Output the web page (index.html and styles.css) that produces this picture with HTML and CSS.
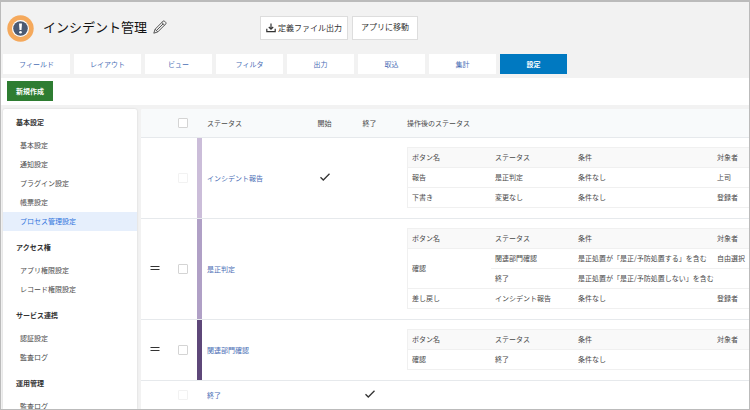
FILE: index.html
```html
<!DOCTYPE html>
<html lang="ja">
<head>
  <meta charset="UTF-8">
  <meta name="viewport" content="width=device-width, initial-scale=1">
  <title>インシデント管理</title>
  <link rel="stylesheet" href="styles.css">
</head>
<body>
<div class="window">

  <!-- ヘッダー -->
  <header class="header">
    <div class="app-title">
      <svg class="app-icon" viewBox="0 0 27 27" aria-hidden="true">
        <circle cx="13.5" cy="13.5" r="13.2" fill="#f5a95c"/>
        <circle cx="13.5" cy="13.9" r="8.6" fill="#e2a566"/>
        <circle cx="13.5" cy="13.5" r="8.5" fill="#fff"/>
        <circle cx="13.5" cy="13.5" r="7.3" fill="#4b5a73"/>
        <path d="M12 8.6h3l-.5 6.3h-2z" fill="#fff"/>
        <circle cx="13.5" cy="17.3" r="1.3" fill="#fff"/>
      </svg>
      <h1>インシデント管理</h1>
      <svg class="edit-icon" viewBox="0 0 14 14" aria-hidden="true">
        <path d="M.8 13.2l1.3-4L10 1.3q.8-.8 1.7 0l1 1q.8.9 0 1.7L4.8 11.9z M2.1 9.2l2.7 2.7 M8.8 2.5l2.7 2.7 M3.5 10.5l6.6-6.6" fill="none" stroke="#555" stroke-width="1" stroke-linejoin="round"/>
      </svg>
    </div>
    <button type="button" class="header-btn with-icon">
      <svg class="download-icon" viewBox="0 0 10 10" aria-hidden="true">
        <path d="M5 .5v5.5M2.8 4L5 6.2 7.2 4M.8 5.8v2.8h8.4V5.8" fill="none" stroke="#333" stroke-width="1.2"/>
      </svg>定義ファイル出力</button>
    <button type="button" class="header-btn">アプリに移動</button>
  </header>

  <!-- タブ -->
  <nav class="tabs">
    <a href="#" class="tab">フィールド</a>
    <a href="#" class="tab">レイアウト</a>
    <a href="#" class="tab">ビュー</a>
    <a href="#" class="tab">フィルタ</a>
    <a href="#" class="tab">出力</a>
    <a href="#" class="tab">取込</a>
    <a href="#" class="tab">集計</a>
    <a href="#" class="tab active">設定</a>
  </nav>

  <div class="toolbar">
    <button type="button" class="new-btn">新規作成</button>
  </div>

  <div class="content">
    <!-- サイドメニュー -->
    <aside class="sidebar">
      <h2>基本設定</h2>
      <ul>
        <li><a href="#">基本設定</a></li>
        <li><a href="#">通知設定</a></li>
        <li><a href="#">プラグイン設定</a></li>
        <li><a href="#">帳票設定</a></li>
        <li><a href="#" class="current">プロセス管理設定</a></li>
      </ul>
      <h2>アクセス権</h2>
      <ul>
        <li><a href="#">アプリ権限設定</a></li>
        <li><a href="#">レコード権限設定</a></li>
      </ul>
      <h2>サービス連携</h2>
      <ul>
        <li><a href="#">認証設定</a></li>
        <li><a href="#">監査ログ</a></li>
      </ul>
      <h2>運用管理</h2>
      <ul>
        <li><a href="#">監査ログ</a></li>
      </ul>
    </aside>

    <!-- ステータス一覧 -->
    <main class="main">
      <table class="status-table">
        <colgroup>
          <col class="col-drag"><col class="col-check"><col class="col-color"><col class="col-status">
          <col class="col-flag"><col class="col-flag"><col>
        </colgroup>
        <thead>
          <tr>
            <th></th>
            <th><input type="checkbox" aria-label="すべて選択"></th>
            <th></th>
            <th class="name">ステータス</th>
            <th class="flag">開始</th>
            <th class="flag">終了</th>
            <th class="actions">操作後のステータス</th>
          </tr>
        </thead>
        <tbody>
          <tr>
            <td></td>
            <td><input type="checkbox" aria-label="インシデント報告" disabled></td>
            <td class="color-light"></td>
            <td class="name"><a href="#">インシデント報告</a></td>
            <td class="flag"><svg class="check-icon" viewBox="0 0 10 8" aria-hidden="true"><path d="M.5 4.2l2.8 2.8L9.5.8"/></svg></td>
            <td></td>
            <td class="actions">
              <table class="action-table">
                <colgroup><col class="col-button"><col class="col-next"><col class="col-cond"><col></colgroup>
                <tr><th>ボタン名</th><th>ステータス</th><th>条件</th><th>対象者</th></tr>
                <tr><td>報告</td><td>是正判定</td><td>条件なし</td><td>上司</td></tr>
                <tr><td>下書き</td><td>変更なし</td><td>条件なし</td><td>登録者</td></tr>
              </table>
            </td>
          </tr>
          <tr>
            <td><svg class="drag-icon" viewBox="0 0 10 4" aria-hidden="true"><path d="M.5 .5h9M.5 3.5h9"/></svg></td>
            <td><input type="checkbox" aria-label="是正判定"></td>
            <td class="color-mid"></td>
            <td class="name"><a href="#">是正判定</a></td>
            <td></td>
            <td></td>
            <td class="actions">
              <table class="action-table">
                <colgroup><col class="col-button"><col class="col-next"><col class="col-cond"><col></colgroup>
                <tr><th>ボタン名</th><th>ステータス</th><th>条件</th><th>対象者</th></tr>
                <tr><td rowspan="2">確認</td><td>関連部門確認</td><td>是正処置が「是正/予防処置する」を含む</td><td>自由選択</td></tr>
                <tr><td>終了</td><td>是正処置が「是正/予防処置しない」を含む</td><td></td></tr>
                <tr><td>差し戻し</td><td>インシデント報告</td><td>条件なし</td><td>登録者</td></tr>
              </table>
            </td>
          </tr>
          <tr>
            <td><svg class="drag-icon" viewBox="0 0 10 4" aria-hidden="true"><path d="M.5 .5h9M.5 3.5h9"/></svg></td>
            <td><input type="checkbox" aria-label="関連部門確認"></td>
            <td class="color-dark"></td>
            <td class="name"><a href="#">関連部門確認</a></td>
            <td></td>
            <td></td>
            <td class="actions">
              <table class="action-table">
                <colgroup><col class="col-button"><col class="col-next"><col class="col-cond"><col></colgroup>
                <tr><th>ボタン名</th><th>ステータス</th><th>条件</th><th>対象者</th></tr>
                <tr><td>確認</td><td>終了</td><td>条件なし</td><td></td></tr>
              </table>
            </td>
          </tr>
          <tr>
            <td></td>
            <td><input type="checkbox" aria-label="終了" disabled></td>
            <td></td>
            <td class="name"><a href="#">終了</a></td>
            <td></td>
            <td class="flag"><svg class="check-icon" viewBox="0 0 10 8" aria-hidden="true"><path d="M.5 4.2l2.8 2.8L9.5.8"/></svg></td>
            <td></td>
          </tr>
        </tbody>
      </table>
    </main>
  </div>

</div>
</body>
</html>
```

FILE: styles.css
```css
* { box-sizing: border-box; margin: 0; padding: 0; }
body {
  font-family: "Noto Sans CJK JP", sans-serif;
  font-size: 7px; line-height: 10px; color: #4a4a4a;
}
a { color: #4a6eb5; text-decoration: none; }
button { font-family: inherit; cursor: pointer; }
svg { display: block; flex: none; }

.window {
  display: flex; flex-direction: column;
  height: 100vh; overflow: hidden;
  background: #f2f2f2;
  border: 1px solid #bbb; border-top-width: 2px;
}

/* ヘッダー */
.header { display: flex; align-items: center; padding: 0 6px; height: 52px; flex: none; }
.app-title { display: flex; align-items: center; min-width: 253px; }
.app-icon { width: 27px; height: 27px; margin-right: 9px; }
.app-title h1 { padding-bottom: 2px; font-size: 13px; line-height: 20px; font-weight: 400; color: #111; }
.edit-icon { width: 14px; height: 14px; margin: 0 0 2px 6px; }
.header-btn {
  display: flex; align-items: center; justify-content: center;
  height: 24px; padding: 0 8px 2px; margin-right: 4px;
  background: #fff; border: 1px solid #ddd;
  font-size: 8px; line-height: 12px; color: #333;
}
.with-icon { padding: 0 5px; }
.download-icon { width: 10px; height: 10px; margin: 0 2px 1px 0; }

/* タブ */
.tabs { display: flex; gap: 4px; padding: 0 2px; flex: none; }
.tab {
  width: 67px; height: 20px; line-height: 20px;
  text-align: center; background: #fff;
}
.tab.active { background: #0079c1; color: #fff; font-weight: bold; }

.toolbar { background: #fff; margin: 4px 0; padding: 3px 6px 4px; flex: none; }
.new-btn {
  display: block; height: 20px; padding: 0 9px;
  background: #2e7d32; border: 0;
  color: #fff; font-size: 7px; font-weight: bold;
}

.content { display: flex; gap: 4px; padding-left: 2px; flex: 1; min-height: 0; }

/* サイドメニュー */
.sidebar {
  width: 134px; flex: none; overflow: hidden;
  background: #fff; border-radius: 2px 2px 0 0;
  box-shadow: 0 0 2px rgba(0, 0, 0, 0.15);
}
.sidebar h2 { padding-left: 13px; font-size: 7px; line-height: 27px; color: #333; }
.sidebar ul { list-style: none; margin-bottom: 3px; }
.sidebar li a { display: block; padding-left: 17px; line-height: 19px; color: #4a4a4a; }
.sidebar li a.current { background: #e6effc; color: #2f74dd; }

/* ステータス一覧 */
.main {
  flex: 1; min-width: 0; overflow: hidden;
  background: #fff; border-radius: 2px 0 0 0;
}
table { width: 100%; table-layout: fixed; border-collapse: separate; border-spacing: 0; }
th { font-weight: normal; text-align: left; }
td, th { vertical-align: middle; }
.col-drag, .col-check { width: 28px; }
.col-color { width: 5px; }
.col-status { width: 100px; }
.col-flag { width: 45px; }

.status-table > thead > tr > th,
.status-table > tbody > tr > td { height: 29px; border-bottom: 1px solid #e6e9ec; }
.status-table > thead > tr > th { background: #f8fafb; }
.name { padding-left: 5px; }
.flag { text-align: center; }
.actions { padding-left: 15px; }
td.actions { padding-top: 9px; padding-bottom: 10px; }

.color-light { background: #cbbdd9; }
.color-mid { background: #b0a0c6; }
.color-dark { background: #5e4779; }

input[type="checkbox"] {
  appearance: none; display: block;
  width: 10px; height: 10px; margin: 0 auto;
  background: #fff; border: 1px solid #d4d4d4; border-radius: 1px;
}
input[type="checkbox"]:disabled { border-color: #f2f2f2; }
.check-icon { width: 10px; height: 8px; margin: 0 auto 2px; fill: none; stroke: #333; stroke-width: 1.3; }
.drag-icon { width: 10px; height: 4px; margin: 0 auto 3px; stroke: #333; stroke-width: 1.2; }

/* 操作後のステータス */
.action-table { border-top: 1px solid #f0f0f0; border-left: 1px solid #f0f0f0; }
.action-table th, .action-table td {
  height: 20px; padding: 0 0 1px 4px;
  border-bottom: 1px solid #f0f0f0; white-space: nowrap;
}
.action-table th { background: #f9f9f9; }
.col-button { width: 83px; }
.col-next { width: 83px; }
.col-cond { width: 139px; }
```
